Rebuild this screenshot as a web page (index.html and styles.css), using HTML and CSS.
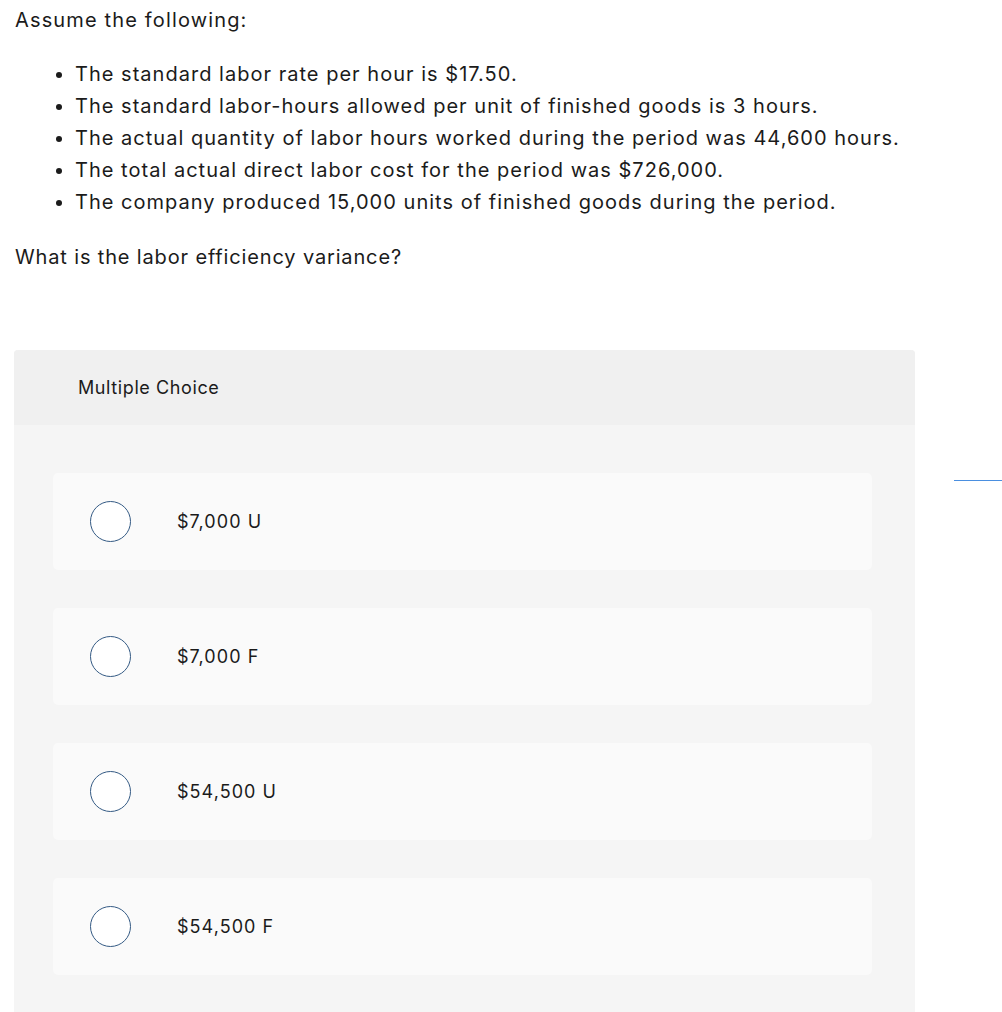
FILE: index.html
```html
<!DOCTYPE html>
<html>
<head>
<meta charset="utf-8">
<link rel="stylesheet" href="styles.css">
</head>
<body>
<div class="page">
  <div class="question">
    <p class="intro">Assume the following:</p>
    <ul class="facts">
      <li>The standard labor rate per hour is $17.50.</li>
      <li>The standard labor-hours allowed per unit of finished goods is 3 hours.</li>
      <li>The actual quantity of labor hours worked during the period was 44,600 hours.</li>
      <li>The total actual direct labor cost for the period was $726,000.</li>
      <li>The company produced 15,000 units of finished goods during the period.</li>
    </ul>
    <p class="ask">What is the labor efficiency variance?</p>
  </div>
  <div class="mc-row">
    <div class="mc">
      <div class="mc-head">Multiple Choice</div>
      <div class="mc-body">
        <div class="option"><span class="radio"></span><span class="label">$7,000 U</span></div>
        <div class="option"><span class="radio"></span><span class="label">$7,000 F</span></div>
        <div class="option"><span class="radio"></span><span class="label">$54,500 U</span></div>
        <div class="option"><span class="radio"></span><span class="label">$54,500 F</span></div>
      </div>
    </div>
    <div class="side"><span class="rule"></span></div>
  </div>
</div>
</body>
</html>
```
FILE: styles.css
```css
html, body {
  margin: 0;
  padding: 0;
  background: #ffffff;
}
body {
  font-family: "Inter", "Open Sans", sans-serif;
  color: #1b1b1b;
  overflow: hidden;
}
.page {
  padding-left: 15px;
}
.question {
  font-size: 20px;
  letter-spacing: 1.02px;
}
.intro {
  margin: 0;
  padding-top: 6px;
  line-height: 28px;
  letter-spacing: 1.15px;
}
.facts {
  margin: 24px 0 0 0;
  padding-left: 60px;
  line-height: 32px;
}
.ask {
  margin: 25px 0 0 0;
  line-height: 28px;
  letter-spacing: 0.85px;
}
.mc-row {
  display: flex;
  margin-top: 79px;
  margin-left: -1px;
}
.mc {
  width: 901px;
  background: #f5f5f5;
  border-radius: 4px 4px 0 0;
  overflow: hidden;
}
.mc-head {
  height: 75px;
  background: #f0f0f0;
  font-size: 18px;
  line-height: 75px;
  padding-left: 64px;
  letter-spacing: 0.6px;
  box-sizing: border-box;
}
.mc-body {
  padding: 48px 43px 40px 39px;
  display: flex;
  flex-direction: column;
  gap: 38px;
}
.option {
  height: 97px;
  background: #fafafa;
  border-radius: 5px;
  display: flex;
  align-items: center;
  padding-left: 37px;
}
.radio {
  width: 39px;
  height: 39px;
  border: 1.5px solid #345a84;
  border-radius: 50%;
  background: #ffffff;
  flex: none;
}
.label {
  margin-left: 46px;
  font-size: 18px;
  letter-spacing: 1.05px;
}
.side {
  flex: 1;
  position: relative;
}
.rule {
  position: absolute;
  left: 39px;
  right: 0;
  top: 130px;
  height: 1px;
  background: #4a8fe0;
}
```
